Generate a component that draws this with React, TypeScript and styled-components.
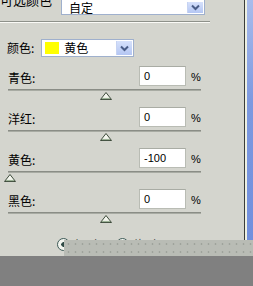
import React, { FC } from 'react'
import styled, { createGlobalStyle } from 'styled-components'

const GlobalStyle = createGlobalStyle`
	html, body {
		margin: 0;
		padding: 0;
		overflow: hidden;
		background: #d4d5ce;
	}
`

type Channel = {
	label: string
	value: number
}

const channels: Channel[] = [
	{ label: '青色:', value: 0 },
	{ label: '洋红:', value: 0 },
	{ label: '黄色:', value: -100 },
	{ label: '黑色:', value: 0 },
]

const Arrow: FC = () => (
	<ArrowButton>
		<svg width="9" height="7" viewBox="0 0 9 7">
			<path d="M1 1.5 L4.5 5 L8 1.5" fill="none" stroke="#4a5d87" strokeWidth="2" />
		</svg>
	</ArrowButton>
)

const Thumb: FC<{ value: number }> = ({ value }) => {
	const left = 10 + ((value + 100) / 200) * 192 - 6
	return (
		<ThumbMark style={{ left }}>
			<svg width="12" height="8" viewBox="0 0 12 8">
				<path d="M6 0.5 L11.5 7.5 L0.5 7.5 Z" fill="#f4f6ee" stroke="#3c4a3a" strokeWidth="1" />
				<path d="M2 6.5 L10 6.5" stroke="#9cb296" strokeWidth="1.2" />
			</svg>
		</ThumbMark>
	)
}

const App: FC = () => {
	return (
		<Screen>
			<GlobalStyle />
			<Upper>
				<Main>
					<TopRow>
						<TopLabel>可选颜色</TopLabel>
						<TopSelect>
							<SelectText>自定</SelectText>
							<Arrow />
						</TopSelect>
					</TopRow>
					<Groove />
					<ColorRow>
						<RowLabel>颜色:</RowLabel>
						<ColorSelect>
							<Swatch />
							<SelectText>黄色</SelectText>
							<Arrow />
						</ColorSelect>
					</ColorRow>
					<Channels>
						{channels.map((c) => (
							<SliderRow key={c.label}>
								<ValueLine>
									<RowLabel>{c.label}</RowLabel>
									<ValueBox>{c.value}</ValueBox>
									<Percent>%</Percent>
								</ValueLine>
								<Track>
									<Thumb value={c.value} />
								</Track>
							</SliderRow>
						))}
					</Channels>
					<RadioRow>
						<Radio $checked />
						<RadioLabel>相对</RadioLabel>
						<Radio />
						<RadioLabel>绝对</RadioLabel>
					</RadioRow>
				</Main>
				<Edge>
					<EdgeDark />
					<EdgeLight />
					<EdgeBlue />
				</Edge>
				<DottedBand />
			</Upper>
			<BottomBand />
		</Screen>
	)
}

const cjk = `'Noto Sans CJK SC', 'Noto Sans', sans-serif`

const Screen = styled.div`
	width: 253px;
	height: 286px;
	overflow: hidden;
	display: flex;
	flex-direction: column;
	background: #d4d5ce;
	color: #000;
	font-family: ${cjk};
`

const Upper = styled.div`
	position: relative;
	height: 256px;
	flex-shrink: 0;
	display: flex;
	overflow: hidden;
`

const Main = styled.div`
	width: 244px;
	display: flex;
	flex-direction: column;
	> * {
		flex-shrink: 0;
	}
`

const TopRow = styled.div`
	display: flex;
	align-items: flex-start;
	margin-top: -9px;
	height: 24px;
`

const TopLabel = styled.div`
	width: 61px;
	font-size: 13px;
	line-height: 14px;
	padding-top: 2px;
	white-space: nowrap;
`

const SelectText = styled.span`
	flex: 1;
	font-size: 12px;
	line-height: 14px;
	padding-left: 5px;
	white-space: nowrap;
`

const ArrowButton = styled.div`
	width: 15px;
	align-self: stretch;
	display: flex;
	align-items: center;
	justify-content: center;
	background: linear-gradient(#d6e1fb, #b4c6f3);
	border-left: 1px solid #c6d3f2;
`

const TopSelect = styled.div`
	width: 144px;
	height: 24px;
	box-sizing: border-box;
	display: flex;
	align-items: center;
	padding: 1px;
	padding-top: 10px;
	background: #fff;
	border: 1px solid #9fb0cd;
	${SelectText} {
		padding-left: 6px;
	}
`

const Groove = styled.div`
	width: 210px;
	margin-top: 6px;
	border-top: 1px solid #8e918a;
	border-bottom: 1px solid #fafaf6;
`

const ColorRow = styled.div`
	display: flex;
	align-items: center;
	margin-top: 16px;
	padding-left: 7px;
	height: 18px;
`

const RowLabel = styled.div`
	font-size: 12px;
	line-height: 14px;
	white-space: nowrap;
`

const ColorSelect = styled.div`
	margin-left: 7px;
	width: 93px;
	height: 18px;
	box-sizing: border-box;
	display: flex;
	align-items: center;
	padding: 1px;
	background: #fff;
	border: 1px solid #9fb0cd;
`

const Swatch = styled.div`
	width: 14px;
	height: 12px;
	margin-left: 2px;
	background: #ffff00;
`

const Channels = styled.div`
	margin-top: 9px;
	display: flex;
	flex-direction: column;
`

const SliderRow = styled.div`
	height: 41px;
	padding-left: 8px;
	display: flex;
	flex-direction: column;
`

const ValueLine = styled.div`
	display: flex;
	align-items: center;
	height: 20px;
	${RowLabel} {
		width: 131px;
		padding-top: 3px;
	}
`

const ValueBox = styled.div`
	width: 47px;
	height: 20px;
	box-sizing: border-box;
	background: #fff;
	border: 1px solid #b9bcb4;
	border-top-color: #a9aca4;
	padding-left: 4px;
	font-family: 'Liberation Sans', Arial, sans-serif;
	font-size: 11px;
	line-height: 18px;
`

const Percent = styled.div`
	margin-left: 5px;
	font-family: 'Liberation Sans', Arial, sans-serif;
	font-size: 11px;
	padding-top: 1px;
`

const Track = styled.div`
	position: relative;
	margin-top: 3px;
	width: 193px;
	height: 0;
	border-top: 1px solid #8a8d86;
	border-bottom: 1px solid #a8aba3;
`

const ThumbMark = styled.div`
	position: absolute;
	top: 2px;
	width: 12px;
	height: 8px;
	line-height: 0;
	margin-left: -8px;
`

const RadioRow = styled.div`
	display: flex;
	align-items: center;
	margin-top: 8px;
	padding-left: 57px;
	height: 13px;
`

const Radio = styled.div<{ $checked?: boolean }>`
	width: 11px;
	height: 11px;
	border-radius: 50%;
	border: 1px solid #3f5c59;
	background: ${({ $checked }) =>
		$checked ? 'radial-gradient(circle, #2f4a45 0 2px, #f2f4ee 2.5px)' : '#f2f4ee'};
`

const RadioLabel = styled.span`
	width: 42px;
	margin-left: 4px;
	font-size: 12px;
	color: #4a4c48;
`

const Edge = styled.div`
	display: flex;
	width: 9px;
`

const EdgeDark = styled.div`
	width: 1px;
	background: #3a3c38;
`

const EdgeLight = styled.div`
	width: 2px;
	background: #eef0e2;
`

const EdgeBlue = styled.div`
	flex: 1;
	background: linear-gradient(#a9bcec, #7c99e0 40%, #6f8edd);
`

const DottedBand = styled.div`
	position: absolute;
	left: 64px;
	right: 0;
	top: 240px;
	height: 16px;
	background-color: #b9bcb5;
	background-image: radial-gradient(circle, #9fa39c 0.8px, transparent 1.2px);
	background-size: 7px 8px;
	background-position: 1px 0;
`

const BottomBand = styled.div`
	flex: 1;
	background: #808080;
`

export default App
